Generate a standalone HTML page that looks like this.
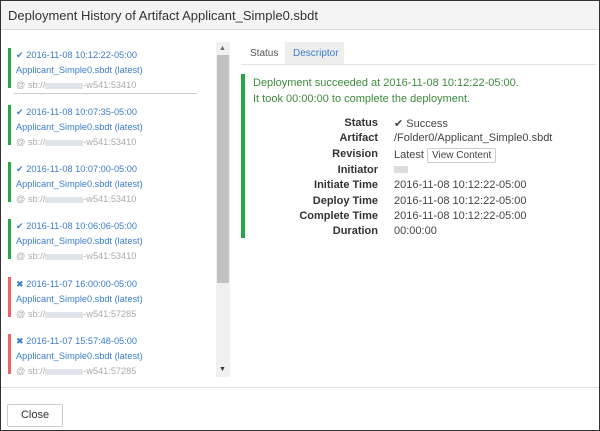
<!DOCTYPE html>
<html><head><style>
*{margin:0;padding:0;box-sizing:border-box}
body{width:600px;height:431px;background:#fff;font-family:"Liberation Sans",sans-serif;font-size:11px;position:relative;overflow:hidden;border:1px solid #333}
.hdr{position:absolute;left:0;top:0;width:598px;height:29px;background:#f4f4f4;border-bottom:1px solid #ddd;font-size:13px;color:#333;padding:7px 7px}
.item{position:absolute;left:7px;width:200px;height:40px;border-left:3px solid #28a745;padding-left:5px;line-height:15px;font-size:9.2px}
.item.f{border-left-color:#f0616a}
.b{color:#3a7dc9}
.g{color:#aaa}
.blur{display:inline-block;width:38px;height:6px;background:#dfe4ea;vertical-align:middle}
.sb{position:absolute;left:215px;top:41px;width:14px;height:335px;background:#f0f0f0}
.th{position:absolute;left:216px;top:54px;width:12px;height:228px;background:#c1c1c1}
.tab{position:absolute;top:41px;height:23px;padding:6px 8px;font-size:10px}
.row{position:absolute;left:245px;width:350px;height:15px;color:#333;font-size:11px}
.row .l{position:absolute;right:218px;font-weight:bold;white-space:nowrap}
.row .v{position:absolute;left:148px;white-space:nowrap;color:#444}
</style></head><body>
<div class="hdr">Deployment History of Artifact Applicant_Simple0.sbdt</div>

<div class="item" style="top:47px"><div class="b">✔ 2016-11-08 10:12:22-05:00</div><div class="b">Applicant_Simple0.sbdt (latest)</div><div class="g">@ sb://<span class="blur"></span>-w541:53410</div></div>
<div style="position:absolute;left:13px;top:92px;width:183px;height:1px;background:#ccc"></div>
<div class="item" style="top:104px"><div class="b">✔ 2016-11-08 10:07:35-05:00</div><div class="b">Applicant_Simple0.sbdt (latest)</div><div class="g">@ sb://<span class="blur"></span>-w541:53410</div></div>
<div class="item" style="top:161px"><div class="b">✔ 2016-11-08 10:07:00-05:00</div><div class="b">Applicant_Simple0.sbdt (latest)</div><div class="g">@ sb://<span class="blur"></span>-w541:53410</div></div>
<div class="item" style="top:218px"><div class="b">✔ 2016-11-08 10:06:06-05:00</div><div class="b">Applicant_Simple0.sbdt (latest)</div><div class="g">@ sb://<span class="blur"></span>-w541:53410</div></div>
<div class="item f" style="top:276px"><div class="b">✖ 2016-11-07 16:00:00-05:00</div><div class="b">Applicant_Simple0.sbdt (latest)</div><div class="g">@ sb://<span class="blur"></span>-w541:57285</div></div>
<div class="item f" style="top:333px"><div class="b">✖ 2016-11-07 15:57:48-05:00</div><div class="b">Applicant_Simple0.sbdt (latest)</div><div class="g">@ sb://<span class="blur"></span>-w541:57285</div></div>

<div class="sb"></div><div class="th"></div>
<div style="position:absolute;left:218px;top:44px;font-size:7px;color:#666">▲</div>
<div style="position:absolute;left:218px;top:365px;font-size:7px;color:#333">▼</div>

<div class="tab" style="left:241px;color:#555">Status</div>
<div class="tab" style="left:284px;width:59px;background:#eee;color:#3a7dc9">Descriptor</div>
<div style="position:absolute;left:240px;top:63px;width:355px;height:1px;background:#e3e3e3"></div>
<div style="position:absolute;left:240px;top:73px;width:4px;height:164px;background:#28a745"></div>
<div style="position:absolute;left:252px;top:74px;color:#3c8c3c;font-size:11px;line-height:16px">Deployment succeeded at 2016-11-08 10:12:22-05:00.<br>It took 00:00:00 to complete the deployment.</div>

<div class="row" style="top:116px"><span class="l">Status</span><span class="v">✔ Success</span></div>
<div class="row" style="top:131px"><span class="l">Artifact</span><span class="v">/Folder0/Applicant_Simple0.sbdt</span></div>
<div class="row" style="top:147px"><span class="l">Revision</span><span class="v">Latest <span style="display:inline-block;border:1px solid #ccc;border-radius:2px;padding:1px 4px;font-size:10px">View Content</span></span></div>
<div class="row" style="top:163px"><span class="l">Initiator</span><span class="v"><span style="display:inline-block;width:14px;height:7px;background:#ddd"></span></span></div>
<div class="row" style="top:178px"><span class="l">Initiate Time</span><span class="v">2016-11-08 10:12:22-05:00</span></div>
<div class="row" style="top:194px"><span class="l">Deploy Time</span><span class="v">2016-11-08 10:12:22-05:00</span></div>
<div class="row" style="top:209px"><span class="l">Complete Time</span><span class="v">2016-11-08 10:12:22-05:00</span></div>
<div class="row" style="top:224px"><span class="l">Duration</span><span class="v">00:00:00</span></div>

<div style="position:absolute;left:0;top:386px;width:598px;height:1px;background:#ddd"></div>
<div style="position:absolute;left:6px;top:403px;width:56px;height:23px;border:1px solid #ccc;border-radius:2px;text-align:center;line-height:21px;font-size:11px;color:#333">Close</div>
</body></html>
